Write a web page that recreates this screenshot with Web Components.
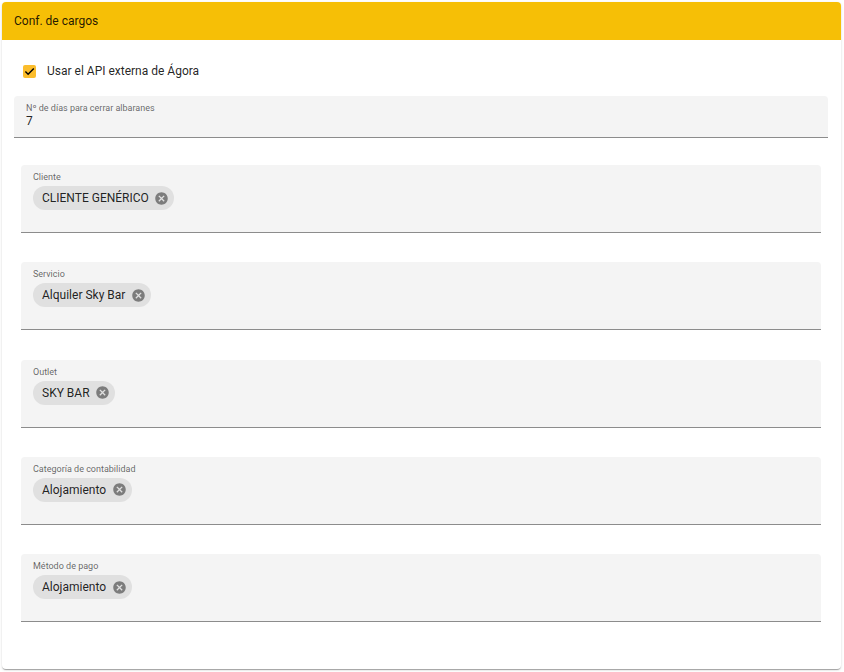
<!DOCTYPE html>
<html lang="es"><head><meta charset="utf-8"><title>Conf. de cargos</title>
<style>
html,body{margin:0;padding:0;background:#fff;font-family:Roboto,"Liberation Sans",sans-serif;color:rgba(0,0,0,.87)}
body{padding:2px 3px 3px 2px;height:672px;box-sizing:border-box}
</style></head><body>
<template id="t-card"><style>
:host{display:block;height:667px;background:#fff;border-radius:4px;overflow:hidden;box-shadow:0 2px 1px -1px rgba(0,0,0,.2),0 1px 1px 0 rgba(0,0,0,.14),0 1px 3px 0 rgba(0,0,0,.12)}
header{height:38px;background:#f6bf06;display:flex;align-items:center;padding:0 12px;font-size:12px;font-weight:400;color:rgba(0,0,0,.87)}
.b{display:flex;flex-direction:column;padding:0 13px 0 12px}
</style><header><slot name="title"></slot></header><div class="b"><slot></slot></div></template>

<template id="t-check"><style>
:host{display:flex;align-items:center;gap:11px;height:14px;margin:24px 0 0 9px;font-size:12px}
.box{width:13px;height:13px;background:#fbbd2c;border-radius:2px;display:block;flex:none}
</style><svg class="box" viewBox="0 0 13 13"><path d="M2.4 6.6 5.1 9.3 10.8 3.4" fill="none" stroke="#000" stroke-width="1.4"/></svg><span><slot></slot></span></template>

<template id="t-num"><style>
:host{display:block;box-sizing:border-box;height:42px;margin-top:18px;background:#f4f4f4;border-radius:4px 4px 0 0;border-bottom:1px solid #8c8c8c;padding:7px 12px 0}
.l{font-size:9px;line-height:11px;color:rgba(0,0,0,.6)}
.v{font-size:12px;line-height:15px}
</style><div class="l"><slot name="label"></slot></div><div class="v"><slot></slot></div></template>

<template id="t-chips"><style>
:host{display:block;box-sizing:border-box;height:68px;margin:0 7px;margin-top:29.33px;background:#f4f4f4;border-radius:4px 4px 0 0;border-bottom:1px solid #8c8c8c;padding:7px 12px 0}
.l{font-size:9px;line-height:11px;color:rgba(0,0,0,.6);margin-bottom:3px}
</style><div class="l"><slot name="label"></slot></div><slot></slot></template>

<template id="t-chip"><style>
:host{display:inline-flex;align-items:center;height:24px;border-radius:12px;background:#e0e0e0;padding:0 5px 0 9px;font-size:12px;gap:5.5px;white-space:nowrap}
svg{width:15px;height:15px;display:block}
</style><slot></slot><svg viewBox="0 0 24 24"><path fill="#7c7c7c" d="M12 2C6.47 2 2 6.47 2 12s4.47 10 10 10 10-4.47 10-10S17.53 2 12 2zm5 13.59L15.59 17 12 13.41 8.41 17 7 15.59 10.59 12 7 8.41 8.41 7 12 10.59 15.59 7 17 8.41 13.41 12 17 15.59z"/></svg></template>

<x-card>
<span slot="title">Conf. de cargos</span>
<x-check>Usar el API externa de Ágora</x-check>
<x-num><span slot="label">Nº de días para cerrar albaranes</span>7</x-num>
<x-chips style="margin-top:27px"><span slot="label">Cliente</span><x-chip>CLIENTE GENÉRICO</x-chip></x-chips>
<x-chips><span slot="label">Servicio</span><x-chip>Alquiler Sky Bar</x-chip></x-chips>
<x-chips><span slot="label">Outlet</span><x-chip>SKY BAR</x-chip></x-chips>
<x-chips><span slot="label">Categoría de contabilidad</span><x-chip>Alojamiento</x-chip></x-chips>
<x-chips><span slot="label">Método de pago</span><x-chip>Alojamiento</x-chip></x-chips>
</x-card>
<script>
for (const [n,t] of [['x-card','t-card'],['x-check','t-check'],['x-num','t-num'],['x-chips','t-chips'],['x-chip','t-chip']]) {
  customElements.define(n, class extends HTMLElement {
    constructor(){super();this.attachShadow({mode:'open'}).appendChild(document.getElementById(t).content.cloneNode(true));}
  });
}
</script>
</body></html>
